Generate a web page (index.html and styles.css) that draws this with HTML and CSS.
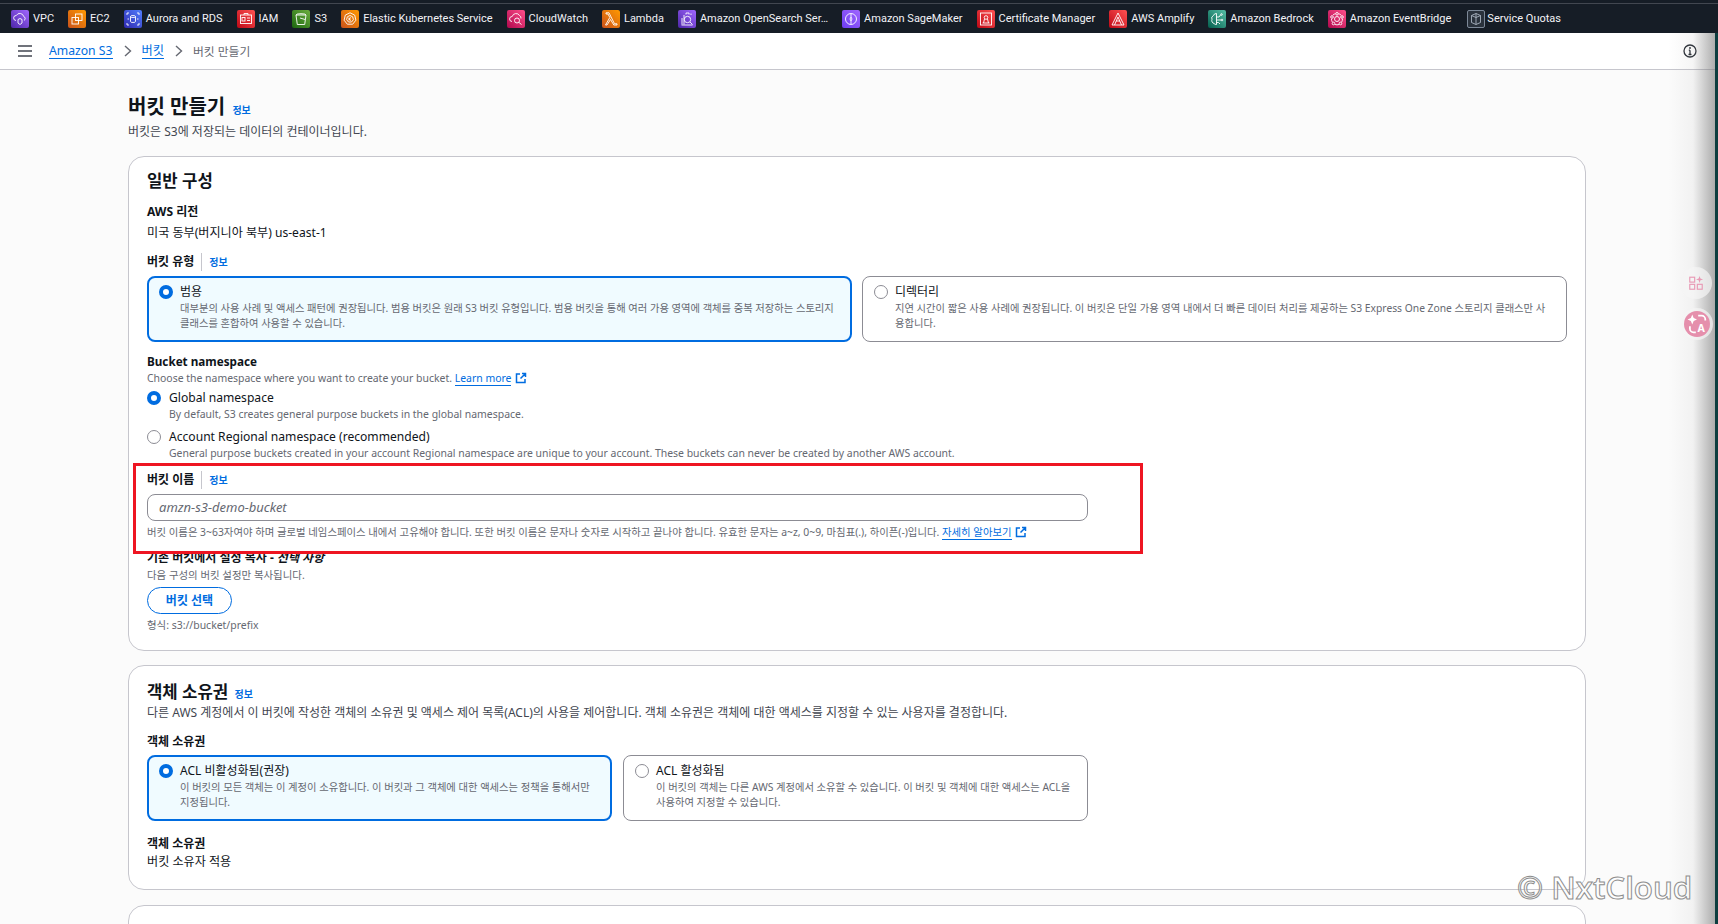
FILE: index.html
```html
<!DOCTYPE html>
<html lang="ko">
<head>
<meta charset="utf-8">
<title>버킷 만들기</title>
<link rel="stylesheet" href="styles.css">
</head>
<body>
<nav class="topbar">
  <a class="svc"><span class="ico purple"><svg viewBox="0 0 18 18"><path d="M5 10.500a2.500 2.500 0 0 1 .3-5 4 4 0 0 1 7.400 1 2.200 2.200 0 0 1 .3 4"/><path d="M7 9.500l2-1 2 1v3.500l-2 1.500-2-1.500z"/></svg></span>VPC</a>
  <a class="svc"><span class="ico orange"><svg viewBox="0 0 18 18"><rect x="7.500" y="4" width="6.500" height="6.500"/><rect x="4" y="7.500" width="6.500" height="6.500"/></svg></span>EC2</a>
  <a class="svc"><span class="ico blue"><svg viewBox="0 0 18 18"><path d="M3 3h2M3 3v2M15 3h-2M15 3v2M3 15h2M3 15v-2M15 15h-2M15 15v-2"/><ellipse cx="9" cy="6.500" rx="2.500" ry="1"/><path d="M6.500 6.500v5a2.500 1 0 0 0 5 0v-5M3.500 9h1.500M13 9h1.500"/></svg></span>Aurora and RDS</a>
  <a class="svc"><span class="ico red"><svg viewBox="0 0 18 18"><rect x="3.500" y="5" width="11" height="8.500"/><rect x="5" y="7.500" width="3" height="3.500"/><path d="M10 8h3M10 10.500h3M7 5V3.500h4V5"/></svg></span>IAM</a>
  <a class="svc"><span class="ico green"><svg viewBox="0 0 18 18"><path d="M4 5h10l-1.300 9.500H5.300z"/><path d="M4 5a5 1.300 0 0 1 10 0M8 8l5 1.500"/></svg></span>S3</a>
  <a class="svc"><span class="ico orange"><svg viewBox="0 0 18 18"><path d="M9 2.800l4.700 2.300 1.200 5.100-3.200 4H6.300l-3.200-4 1.200-5.100z"/><path d="M9 5.500l2.700 1.300.7 2.900-1.900 2.300h-3L5.600 9.700l.7-2.900z"/><path d="M8 7.500v3M8 9l2-1.500M8 9l2 1.500"/></svg></span>Elastic Kubernetes Service</a>
  <a class="svc"><span class="ico pink"><svg viewBox="0 0 18 18"><path d="M5 11.500a2.500 2.500 0 0 1 .2-5 4 4 0 0 1 7.300-1 3 3 0 0 1 1.500 3"/><circle cx="10" cy="10.500" r="2.500"/><path d="M12 12.500l2.500 2"/></svg></span>CloudWatch</a>
  <a class="svc"><span class="ico orange"><svg viewBox="0 0 18 18"><path d="M3.500 15l4.300-7.500L6 4H4V2.800h3l5.500 11H15V15h-3.200L8.500 9.500 5 15z"/></svg></span>Lambda</a>
  <a class="svc"><span class="ico violet"><svg viewBox="0 0 18 18"><circle cx="9.500" cy="9.500" r="3.200"/><path d="M12 12l2.500 2.500M4 14.500V8M6 14.500V5M8 4.500V3h3v1.500M13 5V3.500M3.500 15h11"/></svg></span>Amazon OpenSearch Ser…</a>
  <a class="svc"><span class="ico lilac"><svg viewBox="0 0 18 18"><circle cx="9" cy="9" r="5.500"/><path d="M9 4v3l-1 2 1 2v3M9 7l1 2-1 2"/></svg></span>Amazon SageMaker</a>
  <a class="svc"><span class="ico red"><svg viewBox="0 0 18 18"><rect x="3.500" y="3" width="11" height="12"/><circle cx="9" cy="7.500" r="1.800"/><path d="M7.500 9l-1 4M10.500 9l1 4M5.500 13h7"/></svg></span>Certificate Manager</a>
  <a class="svc"><span class="ico red"><svg viewBox="0 0 18 18"><path d="M9 3l6 12H3z"/><path d="M9 7l3.500 8M9 7l-3.500 8M7 11h4"/></svg></span>AWS Amplify</a>
  <a class="svc"><span class="ico teal"><svg viewBox="0 0 18 18"><path d="M8.500 3.500a3 3 0 0 0-3 2 3 3 0 0 0-1.500 4 3 3 0 0 0 2 4 3 3 0 0 0 2.500 1z"/><path d="M8.500 7H11l1.500-2M8.500 10H13M8.500 12.500h2l1.500 1.500"/><circle cx="13.500" cy="4.500" r=".8"/><circle cx="14" cy="10" r=".8"/></svg></span>Amazon Bedrock</a>
  <a class="svc"><span class="ico pink"><svg viewBox="0 0 18 18"><circle cx="9" cy="9" r="2.500"/><circle cx="9" cy="3.800" r="1.300"/><circle cx="4" cy="7" r="1.300"/><circle cx="14" cy="7" r="1.300"/><circle cx="5.500" cy="13.500" r="1.300"/><circle cx="12.500" cy="13.500" r="1.300"/><path d="M5 5a6 6 0 0 1 2.500-1.300M10.500 3.700A6 6 0 0 1 13 5M3.500 9a6 6 0 0 0 .8 3M14.500 9a6 6 0 0 1-.8 3M7 14.500a6 6 0 0 0 4 0"/></svg></span>Amazon EventBridge</a>
  <a class="svc svc-q"><span class="ico slate"><svg viewBox="0 0 18 18"><path d="M9 3.500l4.500 2v7L9 14.500l-4.500-2v-7z"/><path d="M9 3.500V14.500M4.500 5.500L9 7.500l4.500-2"/></svg></span>Service Quotas</a>
</nav>

<header class="crumbs">
  <svg class="burger" viewBox="0 0 14 12"><path d="M0 1h14M0 6h14M0 11h14"/></svg>
  <a class="crumb-link">Amazon S3</a>
  <svg class="chev" viewBox="0 0 8 12"><path d="M1 1l5.500 5L1 11"/></svg>
  <a class="crumb-link">버킷</a>
  <svg class="chev" viewBox="0 0 8 12"><path d="M1 1l5.500 5L1 11"/></svg>
  <span class="crumb-cur">버킷 만들기</span>
  <svg class="info" viewBox="0 0 14 14"><circle cx="7" cy="7" r="6"/><path d="M7 6.200v4.300M5.500 10.500h3M5.800 6.200H7"/><circle class="info-dot" cx="7" cy="4" r=".9"/></svg>
</header>

<main class="page">
  <div class="page-head">
    <h1 class="h1">버킷 만들기 <a class="inf inf-h">정보</a></h1>
    <p class="sub">버킷은 S3에 저장되는 데이터의 컨테이너입니다.</p>
  </div>

  <section class="card">
    <h2 class="h2">일반 구성</h2>
    <div class="label mt9">AWS 리전</div>
    <div class="value mt3">미국 동부(버지니아 북부) us-east-1</div>
    <div class="label mt11"><span class="lab-sep">버킷 유형</span><a class="inf">정보</a></div>
    <div class="tiles tiles-wide">
      <div class="tile on">
        <span class="radio sel"></span>
        <div><div class="tile-t">범용</div><div class="tile-d">대부분의 사용 사례 및 액세스 패턴에 권장됩니다. 범용 버킷은 원래 S3 버킷 유형입니다. 범용 버킷을 통해 여러 가용 영역에 객체를 중복 저장하는 스토리지 클래스를 혼합하여 사용할 수 있습니다.</div></div>
      </div>
      <div class="tile">
        <span class="radio"></span>
        <div><div class="tile-t">디렉터리</div><div class="tile-d">지연 시간이 짧은 사용 사례에 권장됩니다. 이 버킷은 단일 가용 영역 내에서 더 빠른 데이터 처리를 제공하는 S3 Express One Zone 스토리지 클래스만 사용합니다.</div></div>
      </div>
    </div>

    <div class="label-s ns-label mt11">Bucket namespace</div>
    <div class="desc mt1">Choose the namespace where you want to create your bucket. <a class="lnk">Learn more</a> <svg class="ext" viewBox="0 0 12 12"><path d="M5 2H1.500v8.500H10V7M7 1.500h3.500V5M10.500 1.500L5.500 6.500"/></svg></div>
    <div class="ropt mt4"><span class="radio sel"></span><div><div class="ropt-t">Global namespace</div><div class="desc">By default, S3 creates general purpose buckets in the global namespace.</div></div></div>
    <div class="ropt mt7"><span class="radio"></span><div><div class="ropt-t">Account Regional namespace (recommended)</div><div class="desc">General purpose buckets created in your account Regional namespace are unique to your account. These buckets can never be created by another AWS account.</div></div></div>

    <div class="label mt10"><span class="lab-sep">버킷 이름</span><a class="inf">정보</a></div>
    <div class="input">amzn-s3-demo-bucket</div>
    <div class="desc mt3 hint">버킷 이름은 3~63자여야 하며 글로벌 네임스페이스 내에서 고유해야 합니다. 또한 버킷 이름은 문자나 숫자로 시작하고 끝나야 합니다. 유효한 문자는 a~z, 0~9, 마침표(.), 하이픈(-)입니다. <a class="lnk">자세히 알아보기</a> <svg class="ext" viewBox="0 0 12 12"><path d="M5 2H1.500v8.500H10V7M7 1.500h3.500V5M10.500 1.500L5.500 6.500"/></svg></div>

    <div class="label-s mt10">기존 버킷에서 설정 복사 - <em>선택 사항</em></div>
    <div class="desc mt1">다음 구성의 버킷 설정만 복사됩니다.</div>
    <button class="btn">버킷 선택</button>
    <div class="desc mt4 fmt">형식: s3://bucket/prefix</div>
  </section>

  <section class="card card-2">
    <h2 class="h2">객체 소유권 <a class="inf inf-h">정보</a></h2>
    <p class="value sect-d">다른 AWS 계정에서 이 버킷에 작성한 객체의 소유권 및 액세스 제어 목록(ACL)의 사용을 제어합니다. 객체 소유권은 객체에 대한 액세스를 지정할 수 있는 사용자를 결정합니다.</p>
    <div class="label mt11">객체 소유권</div>
    <div class="tiles tiles-narrow">
      <div class="tile on">
        <span class="radio sel"></span>
        <div><div class="tile-t">ACL 비활성화됨(권장)</div><div class="tile-d">이 버킷의 모든 객체는 이 계정이 소유합니다. 이 버킷과 그 객체에 대한 액세스는 정책을 통해서만 지정됩니다.</div></div>
      </div>
      <div class="tile">
        <span class="radio"></span>
        <div><div class="tile-t">ACL 활성화됨</div><div class="tile-d">이 버킷의 객체는 다른 AWS 계정에서 소유할 수 있습니다. 이 버킷 및 객체에 대한 액세스는 ACL을 사용하여 지정할 수 있습니다.</div></div>
      </div>
    </div>
    <div class="label mt14">객체 소유권</div>
    <div class="value">버킷 소유자 적용</div>
  </section>

  <section class="card card-3">
    <h2 class="h2">이 버킷의 퍼블릭 액세스 차단 설정</h2>
  </section>
</main>

<div class="redbox"></div>
<div class="edge"></div>
<div class="widget w1"><svg viewBox="0 0 18 18"><rect x="2" y="2.500" width="5.500" height="5.500"/><rect x="2" y="10.500" width="5.500" height="5.500"/><rect x="10.500" y="10.500" width="5.500" height="5.500"/><path class="wfill" d="M13 1l1 3 3 1-3 1-1 3-1-3-3-1 3-1z"/></svg></div>
<div class="widget w2"><svg viewBox="0 0 22 22"><path class="wfill-w" d="M7 3l1.200 3L11 7.200 8.200 8.400 7 11.500 5.800 8.400 3 7.200 5.800 6z"/><path class="wline" d="M12 4h3a3 3 0 0 1 3 3v1M5 13v2a3 3 0 0 0 3 3h2"/><text x="11.500" y="18" class="wtxt">A</text></svg></div>
<div class="mark">© NxtCloud</div>
</body>
</html>
```
FILE: styles.css
```css
* { box-sizing: border-box; }
html, body { margin: 0; height: 924px; overflow: hidden; }
body {
  background: #fbfbfb;
  color: #0f141a;
  font-family: "Noto Sans", "Noto Sans CJK KR", sans-serif;
  font-size: 12px;
  position: relative;
}
p, h1, h2 { margin: 0; }

/* top bar */
.topbar {
  height: 33px;
  padding: 4px 0 0 11px;
  background: linear-gradient(#161d26 3px, #424750 3px, #424750 4px, #161d26 4px);
  display: flex;
  align-items: center;
  gap: 14px;
  color: #f3f3f7;
  font-family: Roboto, sans-serif;
  font-size: 11px;
  font-weight: 400;
  white-space: nowrap;
}
.svc { display: flex; align-items: center; gap: 4px; }
.ico { width: 18px; height: 18px; border-radius: 2px; display: block; flex: none; }
.ico svg { width: 18px; height: 18px; display: block; fill: none; stroke: #fff; stroke-width: .9; }
.purple { background: linear-gradient(45deg, #4d27a8, #a166ff); }
.orange { background: linear-gradient(45deg, #c8511b, #f90); }
.blue { background: linear-gradient(45deg, #2e27ad, #527fff); }
.red { background: linear-gradient(45deg, #bd0816, #ff5252); }
.green { background: linear-gradient(45deg, #1b660f, #6cae3e); }
.pink { background: linear-gradient(45deg, #b0084d, #ff4f8b); }
.violet { background: linear-gradient(45deg, #4d27a8, #a166ff); }
.lilac { background: linear-gradient(45deg, #6d3df0, #a166ff); }
.teal { background: linear-gradient(45deg, #055f4e, #56c0a7); }
.slate { background: #2a323c; border: 1px solid #7d8998; }
.slate svg { margin: -1px; stroke: #a9b3bf; }
.svc-q { margin-left: 2px; gap: 2px; }

/* breadcrumb */
.crumbs {
  height: 37px;
  background: #fff;
  border-bottom: 1px solid #c6c6cd;
  display: flex;
  align-items: center;
  padding: 0 21px 1px 18px;
  font-size: 12.200px;
}
.burger { width: 14px; height: 12px; fill: none; stroke: #424650; stroke-width: 1.600; margin-right: 17px; }
.crumb-link { color: #006ce0; border-bottom: 1px solid #006ce0; line-height: 15px; }
.chev { width: 8px; height: 12px; margin: 0 9.500px 0 11.500px; fill: none; stroke: #656871; stroke-width: 1.400; }
.crumb-cur { color: #656871; font-size: 11.800px; }
.info { width: 14px; height: 14px; margin-left: auto; fill: none; stroke: #2b3038; stroke-width: 1.300; }
.info-dot { fill: #2b3038; stroke: none; }

/* page */
.page { padding: 23px 132px 0 128px; }
.page-head { margin-bottom: 15px; }
.h1 { font-size: 20px; line-height: 28px; font-weight: 700; color: #0f141a; }
.sub { font-size: 12px; line-height: 18px; margin-top: 2px; color: #424650; }
.inf { color: #006ce0; font-size: 10px; font-weight: 700; line-height: 1; }
.inf-h { margin-left: 2px; }

.card {
  background: #fff;
  border: 1px solid #c6c6cd;
  border-radius: 16px;
  padding: 11px 18px 18px;
}
.card-2 { margin-top: 14px; padding: 13px 18px 18px; }
.card-3 { margin-top: 15px; padding-top: 15px; height: 60px; }
.h2 { font-size: 16.700px; line-height: 26px; font-weight: 700; color: #0f141a; }
.label { font-size: 12px; line-height: 18px; font-weight: 700; display: flex; align-items: center; color: #0f141a; }
.label-s { font-size: 12px; line-height: 16px; font-weight: 700; }
.ns-label { font-size: 11.700px; }
.lab-sep { padding-right: 7px; margin-right: 7px; border-right: 1px solid #c6c6cd; }
.value { font-size: 12.100px; line-height: 18px; color: #0f141a; }
.sect-d { margin-top: -1px; color: #424650; font-size: 12px; }
.desc { font-size: 10.450px; line-height: 16px; color: #656871; }
.mt1 { margin-top: 1px; }
.mt3 { margin-top: 3px; }
.mt4 { margin-top: 4px; }
.mt7 { margin-top: 7px; }
.mt9 { margin-top: 9px; }
.mt10 { margin-top: 10px; }
.mt11 { margin-top: 11px; }
.mt14 { margin-top: 14px; }
.lnk { color: #006ce0; border-bottom: 1px solid #006ce0; }
.ext { width: 12px; height: 12px; vertical-align: -2px; margin-left: 1px; fill: none; stroke: #006ce0; stroke-width: 1.500; }

/* tiles */
.tiles { display: grid; grid-template-columns: 1fr 1fr; gap: 10px; margin-top: 5px; }
.tiles-narrow { width: 941px; margin-top: 4px; gap: 11px; }
.tile {
  height: 66px;
  border: 1px solid #8c8c94;
  border-radius: 8px;
  padding: 6px 14px 0 11px;
  display: flex;
  gap: 7px;
  background: #fff;
}
.tile.on { border: 2px solid #006ce0; background: #f0fbff; padding: 5px 13px 0 10px; }
.tile-t { font-size: 12px; line-height: 17px; color: #0f141a; }
.tile-d { font-size: 10.300px; line-height: 14.500px; color: #656871; margin-top: 1px; }
.radio {
  width: 14px;
  height: 14px;
  border-radius: 50%;
  border: 1px solid #8c8c94;
  background: #fff;
  flex: none;
  margin-top: 2px;
}
.radio.sel { border: 4px solid #006ce0; }

.ropt { display: flex; gap: 8px; }
.ropt-t { font-size: 12.100px; line-height: 16px; color: #0f141a; }
.ropt .radio { margin-top: 1px; }

.input {
  height: 27px;
  width: 941px;
  margin-top: 5px;
  border: 1px solid #8c8c94;
  border-radius: 8px;
  padding: 0 11px;
  font-size: 13px;
  line-height: 25px;
  font-style: italic;
  color: #656871;
  background: #fff;
}
.hint { white-space: nowrap; font-size: 10.380px; }
.btn {
  display: block;
  width: 85px;
  height: 27px;
  margin-top: 4px;
  padding: 0;
  background: #fff;
  border: 1.500px solid #006ce0;
  border-radius: 20px;
  color: #006ce0;
  font: 700 12px/1 "Noto Sans", "Noto Sans CJK KR", sans-serif;
}
.fmt { line-height: 14px; }

/* overlays */
.redbox {
  position: absolute;
  left: 133px;
  top: 463px;
  width: 1010px;
  height: 91px;
  border: 3px solid #ee1522;
}
.edge {
  position: absolute;
  top: 33px;
  right: 0;
  bottom: 0;
  width: 50px;
  background: linear-gradient(90deg, rgba(130,130,130,0), rgba(130,130,130,.08) 50%, rgba(120,120,120,.6) 93.900%, #0d3d3f 94%, #0d3d3f);
}
.widget {
  position: absolute;
  left: 1680px;
  width: 32px;
  height: 32px;
  border-radius: 50%;
  display: flex;
  align-items: center;
  justify-content: center;
  background: rgba(245,245,245,.7);
}
.w1 { top: 267px; }
.w2 { top: 308px; left: 1681px; }
.w1 svg { width: 16px; height: 16px; fill: none; stroke: #e89ab5; stroke-width: 1.300; }
.wfill { fill: #e89ab5; stroke: none; }
.w2 svg { width: 26px; height: 26px; background: #e58fac; border-radius: 50%; }
.wfill-w { fill: #fff; }
.wline { fill: none; stroke: #fff; stroke-width: 1.500; }
.wtxt { fill: #fff; font: 700 9px "Noto Sans", sans-serif; }
.mark {
  position: absolute;
  left: 1517px;
  top: 869px;
  font: 600 31.300px/36px "Open Sans", sans-serif;
  white-space: nowrap;
  color: rgba(255,255,255,.6);
  -webkit-text-stroke: 1px #8e8e8e;
}
```
